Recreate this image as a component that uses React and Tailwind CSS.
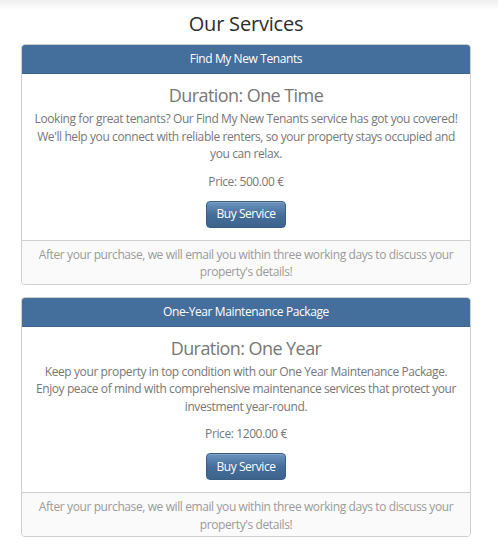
import React from "react";

const services = [
  {
    title: "Find My New Tenants",
    duration: "One Time",
    text: "Looking for great tenants? Our Find My New Tenants service has got you covered! We'll help you connect with reliable renters, so your property stays occupied and you can relax.",
    price: "500.00 €",
  },
  {
    title: "One-Year Maintenance Package",
    duration: "One Year",
    text: "Keep your property in top condition with our One Year Maintenance Package. Enjoy peace of mind with comprehensive maintenance services that protect your investment year-round.",
    price: "1200.00 €",
  },
];

const ServiceCard = ({ service }) => (
  <div className="border border-[#cfcfcf] rounded-[4px] overflow-hidden bg-white tracking-[-0.025em]">
    <div className="h-[29px] flex items-center justify-center bg-[#446e9b] border-b border-[#3e648d] text-white text-[12px]">
      {service.title}
    </div>
    <div className="flex flex-col items-center px-[10px] pt-[11px] pb-[12px] text-center">
      <h4 className="text-[18px] leading-[20px] text-[#777] tracking-[-0.032em]">
        Duration: {service.duration}
      </h4>
      <p className="mt-[5px] text-[12px] leading-[17.5px] text-[#777]">
        {service.text}
      </p>
      <p className="mt-[10px] text-[12px] leading-[17px] text-[#777]">
        Price: {service.price}
      </p>
      <button className="mt-[11px] h-[27px] px-[9px] rounded-[4px] border border-[#3a5f87] bg-gradient-to-b from-[#6d94bf] via-[#446e9b] to-[#3e648d] text-white text-[12px] leading-none tracking-[-0.037em] shadow-[inset_0_1px_0_rgba(255,255,255,0.15)]">
        Buy Service
      </button>
    </div>
    <div className="border-t border-[#cfcfcf] bg-[#fafafa] px-[10px] pt-[5px] pb-[3px] text-center text-[12px] leading-[17.5px] text-[#9a9a9a]">
      After your purchase, we will email you within three working days to discuss your property's details!
    </div>
  </div>
);

const App = () => {
  return (
    <div className="min-h-[557px] bg-white font-['Open_Sans','Liberation_Sans',sans-serif]">
      <div className="h-[10px] bg-gradient-to-b from-[#efefef] to-white" />
      <h2 className="text-center text-[20px] leading-[28px] text-[#2d2d2d] w-[450px] ml-[21px] tracking-[-0.01em]">
        Our Services
      </h2>
      <div className="ml-[21px] w-[450px] mt-[6px] flex flex-col gap-[12px]">
        {services.map((s) => (
          <ServiceCard key={s.title} service={s} />
        ))}
      </div>
    </div>
  );
};

export default App;
